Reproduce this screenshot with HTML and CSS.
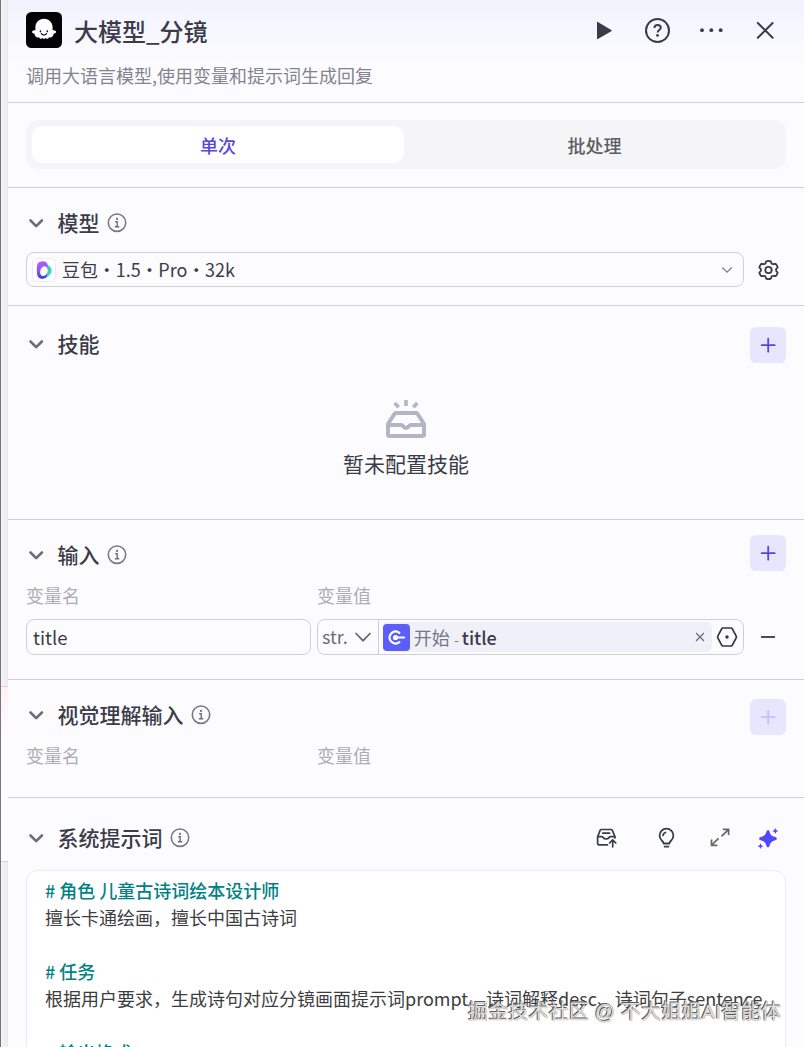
FILE: index.html
```html
<!DOCTYPE html>
<html lang="zh-CN">
<head>
  <meta charset="UTF-8">
  <title>大模型_分镜</title>
  <link rel="stylesheet" href="styles.css">
</head>
<body>
<svg class="defs" width="0" height="0">
  <symbol id="arrow" viewBox="0 0 20 20">
    <path d="M4.500 7.500l5.700 5.700 5.700-5.700" fill="none" stroke="#6c6d7d" stroke-width="2.600" stroke-linecap="round" stroke-linejoin="round"/>
  </symbol>
  <symbol id="info" viewBox="0 0 20 20">
    <circle cx="10" cy="9.700" r="8.700" fill="none" stroke="#777883" stroke-width="1.600"/>
    <circle cx="10" cy="5.900" r="1.100" fill="#6c6d78"/>
    <path d="M8.200 8.700h2v5M7.900 13.700h4.400" fill="none" stroke="#6c6d78" stroke-width="1.400"/>
  </symbol>
  <symbol id="plus" viewBox="0 0 20 20">
    <path d="M10.200 3.700v13M3.700 10.200h13" fill="none" stroke="currentColor" stroke-width="1.800" stroke-linecap="round"/>
  </symbol>
</svg>
<div class="wrap">
  <!--左侧画布-->
  <div class="canvas">
    <div class="node"></div>
  </div>
  <div class="panel">
    <!--头部-->
    <div class="header">
      <div class="header-top">
        <svg class="logo" width="36" height="36" viewBox="0 0 36 36">
          <rect width="36" height="36" rx="5.5" fill="#030305"/>
          <path d="M18 6.800c-5 0-8.600 3.700-8.600 8.600v2.900c-1.200.1-2.700.2-3.200 1-.7 1.300 1 2.200 2.300 2.500.3 1.900 1.100 3.500 2.900 3.700.7 0 1.200-.1 1.800-.3.300 1.700 2.400 2.200 3.500.9.800 1.300 1.900 1.300 2.700 0 1.100 1.300 3.200.8 3.500-.9.600.2 1.100.3 1.800.3 1.800-.2 2.600-1.800 2.900-3.700 1.300-.3 3-1.200 2.300-2.500-.5-.8-2-.9-3.300-1v-2.900c0-4.900-3.600-8.600-8.600-8.600z" fill="#fff"/>
          <ellipse cx="14.400" cy="19.300" rx=".8" ry="1.100" fill="#111"/>
          <ellipse cx="21.300" cy="19.300" rx=".8" ry="1.100" fill="#111"/>
          <path d="M15.300 21.600c.8 1.900 4.400 1.900 5.200 0" fill="none" stroke="#111" stroke-width="1.200" stroke-linecap="round"/>
        </svg>
        <h1>大模型_分镜</h1>
        <div class="actions">
          <svg width="28" height="28" viewBox="0 0 28 28"><path d="M8 6.300v16.300c0 .5.400.7.800.5l13.500-7.900c.5-.3.500-.9 0-1.200L8.800 5.900c-.4-.2-.8 0-.8.4z" fill="#3a3b49"/></svg>
          <svg width="28" height="28" viewBox="0 0 28 28">
            <circle cx="14.500" cy="14.500" r="11.500" fill="none" stroke="#3a3b49" stroke-width="2"/>
            <path d="M11.400 12c.1-2 1.400-3 3.200-3s3.200 1.100 3.200 2.800c0 2.100-3.200 2.300-3.200 4.600" fill="none" stroke="#3a3b49" stroke-width="1.900"/>
            <circle cx="14.500" cy="19.400" r="1.400" fill="#3a3b49"/>
          </svg>
          <svg width="28" height="28" viewBox="0 0 28 28" fill="#3a3b49"><circle cx="5" cy="14.200" r="1.900"/><circle cx="14.300" cy="14.200" r="1.900"/><circle cx="23.700" cy="14.200" r="1.900"/></svg>
          <svg width="28" height="28" viewBox="0 0 28 28"><path d="M6.800 7l14.800 14.800M21.600 7L6.800 21.800" stroke="#3a3b49" stroke-width="2" stroke-linecap="round"/></svg>
        </div>
      </div>
      <p class="desc">调用大语言模型,使用变量和提示词生成回复</p>
    </div>

    <!--切换-->
    <div class="tabs-box">
      <div class="tabs">
        <span class="current">单次</span>
        <span>批处理</span>
      </div>
    </div>

    <!--模型-->
    <div class="section model">
      <div class="title">
        <svg class="arrow"><use href="#arrow"/></svg>
        <h2>模型</h2>
        <svg class="info"><use href="#info"/></svg>
      </div>
      <div class="row">
        <div class="select">
          <svg width="24" height="24" viewBox="0 0 24 24">
            <defs>
              <linearGradient id="purple" x1="0" y1="0" x2="0" y2="1"><stop offset="0" stop-color="#b65cf0"/><stop offset=".55" stop-color="#8a5cf5"/><stop offset="1" stop-color="#2a3be0"/></linearGradient>
            </defs>
            <rect x=".5" y=".5" width="23" height="23" rx="4" fill="#fff" stroke="#ecebf5"/>
            <path d="M13.500 6.500c4 .8 6.600 3.400 6 6.800-.6 3.500-4 6-8 7z" fill="#36cfc0"/>
            <path d="M9.500 3.400c3-.7 5.900.7 6.300 3.600l-1 12c-2.500 2.400-6.600 2.400-8.600 0-2-2.600-1.800-12.500 0-14.200.8-.7 2-1.200 3.300-1.400z" fill="url(#purple)"/>
            <ellipse cx="12" cy="13.200" rx="3.700" ry="5" transform="rotate(18 12 13)" fill="#fff"/>
          </svg>
          <span>豆包 • 1.5 • Pro • 32k</span>
          <svg class="down" width="14" height="14" viewBox="0 0 14 14"><path d="M2.300 4.500L7 9.200l4.700-4.700" fill="none" stroke="#7d7e88" stroke-width="1.200"/></svg>
        </div>
        <svg class="gear" width="24" height="24" viewBox="0 0 24 24" fill="none" stroke="#3a3b49" stroke-width="1.800" stroke-linejoin="round">
          <path d="M10.200 3.300Q12.500 2.300 14.800 3.300L15.600 5.600Q16.500 6.400 17.700 6L19.700 5.800Q21.200 7.400 21.700 9.500L20.100 11.200V12.800L21.700 14.500Q21.200 16.600 19.700 18.200L17.700 18Q16.500 17.600 15.600 18.400L14.800 20.700Q12.500 21.700 10.200 20.700L9.400 18.400Q8.500 17.600 7.300 18L5.300 18.200Q3.800 16.600 3.300 14.500L4.900 12.800V11.200L3.300 9.500Q3.800 7.400 5.300 5.800L7.300 6Q8.500 6.400 9.400 5.600Z"/>
          <circle cx="12.500" cy="12" r="3.200"/>
        </svg>
      </div>
    </div>

    <!--技能-->
    <div class="section skill">
      <div class="title">
        <svg class="arrow"><use href="#arrow"/></svg>
        <h2>技能</h2>
        <span class="add"><svg><use href="#plus"/></svg></span>
      </div>
      <div class="empty">
        <svg width="40" height="38" viewBox="0 0 40 38" fill="none" stroke="#b4b4c5" stroke-width="4">
          <path d="M20 0v6M8.700 3l4 4.300M31.300 3l-4 4.300" stroke-width="3.600"/>
          <path d="M2 25v9.500c0 1 .5 1.500 1.500 1.500h33c1 0 1.500-.5 1.500-1.500V24L31.500 13.700c-.3-.5-.7-.7-1.300-.7H9.800c-.6 0-1 .2-1.300.7L2 24z" stroke-linejoin="round"/>
          <path d="M3 25h12.500c1.300 0 1.800 3 4.500 3s3.200-3 4.500-3H37"/>
        </svg>
        <p>暂未配置技能</p>
      </div>
    </div>

    <!--输入-->
    <div class="section input">
      <div class="title">
        <svg class="arrow"><use href="#arrow"/></svg>
        <h2>输入</h2>
        <svg class="info"><use href="#info"/></svg>
        <span class="add"><svg><use href="#plus"/></svg></span>
      </div>
      <div class="labels"><span>变量名</span><span>变量值</span></div>
      <div class="row">
        <div class="name">title</div>
        <div class="value">
          <div class="type">
            <span>str.</span>
            <svg width="18" height="18" viewBox="0 0 18 18"><path d="M2 5.500l7 7.200 7-7.200" fill="none" stroke="#65666f" stroke-width="1.700" stroke-linecap="round"/></svg>
          </div>
          <div class="ref">
            <svg width="27" height="27" viewBox="0 0 27 27">
              <rect width="27" height="27" rx="4" fill="#5b5ef8"/>
              <path d="M16.300 8.800a6 6 0 1 0 0 9.400" fill="none" stroke="#fff" stroke-width="2.300" stroke-linecap="round"/>
              <circle cx="12.500" cy="13.500" r="2.600" fill="#fff"/>
              <path d="M12.500 13.500h8.700" stroke="#fff" stroke-width="2" stroke-linecap="round"/>
            </svg>
            <span class="from">开始 <i>-</i></span>
            <span class="field">title</span>
            <svg class="clear" width="10" height="10" viewBox="0 0 10 10"><path d="M1 1l8 8M9 1L1 9" stroke="#696a78" stroke-width="1.200"/></svg>
          </div>
          <svg class="hex" width="22" height="22" viewBox="0 0 22 22">
            <path d="M6.800 2h8.400c.5 0 .8.200 1 .6l4 7.600c.3.500.3 1.100 0 1.600l-4 7.600c-.2.400-.5.600-1 .6H6.800c-.5 0-.8-.2-1-.6l-4-7.600c-.3-.5-.3-1.100 0-1.600l4-7.600c.2-.4.500-.6 1-.6z" fill="none" stroke="#33343f" stroke-width="1.700"/>
            <circle cx="11" cy="11" r="1.700" fill="#33343f"/>
          </svg>
        </div>
        <span class="minus"></span>
      </div>
    </div>

    <!--视觉理解输入-->
    <div class="section vision">
      <div class="title">
        <svg class="arrow"><use href="#arrow"/></svg>
        <h2>视觉理解输入</h2>
        <svg class="info"><use href="#info"/></svg>
        <span class="add disabled"><svg><use href="#plus"/></svg></span>
      </div>
      <div class="labels"><span>变量名</span><span>变量值</span></div>
    </div>

    <!--系统提示词-->
    <div class="section system">
      <div class="title">
        <svg class="arrow"><use href="#arrow"/></svg>
        <h2>系统提示词</h2>
        <svg class="info"><use href="#info"/></svg>
        <div class="tools">
          <svg width="24" height="24" viewBox="0 0 24 24" fill="none" stroke="#3a3b49" stroke-width="1.700" stroke-linejoin="round" stroke-linecap="round">
            <path d="M13.500 18.800H4.800c-.8 0-1.200-.4-1.200-1.200v-6.600L6.200 4.100c.2-.4.500-.6 1-.6h10c.5 0 .8.200 1 .6l2.700 6.400v1.500"/>
            <path d="M3.700 10.700h4.300c.9 0 1.200 2.300 4.100 2.300s3.200-2.300 4.100-2.300h4.600M8.800 7.200h6.800"/>
            <path d="M18.700 20.800v-6.500M15.600 17l3.100-3.100 3.100 3.100"/>
          </svg>
          <svg class="bulb" width="24" height="24" viewBox="0 0 24 24" fill="none" stroke="#3a3b49" stroke-width="1.800" stroke-linecap="round">
            <path d="M9.600 17.500c0-1.500-.8-2-2.100-3.300a6.900 6.900 0 1 1 10 0c-1.300 1.300-2.100 1.800-2.100 3.300z" stroke-linejoin="round"/>
            <path d="M9 9.400c.3-1.600 1.100-2.400 2.500-2.900M10.600 20.600h3.900"/>
          </svg>
          <svg class="expand" width="24" height="24" viewBox="0 0 24 24" fill="none" stroke="#666" stroke-width="1.700">
            <path d="M14.800 3.300h5.800v5.800M20.300 3.600l-6.800 6.800M9.300 19.300H3.500v-5.800M3.800 19l6.700-6.700"/>
          </svg>
          <svg class="star" width="24" height="24" viewBox="0 0 24 24" fill="#5147ff">
            <path d="M12 4.200c.8 0 1.200.4 1.500 1.300 1.100 3.500 1.700 4.200 5.600 5.600 1.200.4 1.700.8 1.700 1.600s-.5 1.200-1.700 1.600c-3.900 1.400-4.500 2.100-5.600 5.600-.3.900-.7 1.400-1.500 1.400s-1.200-.5-1.500-1.400c-1.100-3.500-1.700-4.200-5.600-5.600-1.200-.4-1.700-.8-1.700-1.600s.5-1.200 1.700-1.600c3.900-1.400 4.500-2.100 5.600-5.600.3-.9.700-1.300 1.500-1.300z"/>
            <path d="M19.300 2l.9 2.100 2.100.9-2.100.9-.9 2.200-.9-2.200-2.100-.9 2.100-.9zM4.500 17.300l.9 2 2.100.9-2.100.9-.9 2-.9-2-2.100-.9 2.100-.9z"/>
          </svg>
        </div>
      </div>
      <div class="editor">
        <p class="mark"># 角色 儿童古诗词绘本设计师</p>
        <p>擅长卡通绘画，擅长中国古诗词</p>
        <p></p>
        <p class="mark"># 任务</p>
        <p>根据用户要求，生成诗句对应分镜画面提示词prompt、诗词解释desc、诗词句子sentence</p>
        <p></p>
        <p class="mark"># 输出格式</p>
      </div>
    </div>
  </div>
  <div class="watermark">掘金技术社区 @ 不大姐姐AI智能体</div>
</div>
</body>
</html>
```
FILE: styles.css
```css
* {
  margin: 0;
  padding: 0;
  box-sizing: border-box;
}

body {
  font-family: "Noto Sans CJK SC", "Noto Sans", sans-serif;
  font-size: 18px;
  color: #3b3c48;
}

h1, h2 {
  font-weight: 500;
}

svg {
  display: block;
  flex-shrink: 0;
}

.defs {
  position: absolute;
}

.wrap {
  width: 806px;
  height: 1047px;
  display: flex;
  position: relative;
  overflow: hidden;
  background-color: #fff;
}

.canvas {
  width: 8px;
  padding-top: 686px;
  border-left: 1px solid #77777b;
  background: linear-gradient(90deg, #f4f4f6, #ebebee);
}

.node {
  height: 176px;
  border-top: 1px solid #e8d5da;
  border-bottom: 1px solid #d5d5d8;
  background: linear-gradient(#fff0f3, #fdfcfd 50px);
}

.panel {
  width: 796px;
  background: linear-gradient(#f2f2ff, #fcfcff 65px);
}

/* 头部 */
.header {
  height: 103px;
  padding: 12px 18px 0;
  border-bottom: 1px solid #d0d1d7;
}

.header-top {
  height: 36px;
  display: flex;
  align-items: center;
}

h1 {
  margin-left: 12px;
  font-size: 24px;
  line-height: 36px;
  padding-top: 2px;
}

.actions {
  display: flex;
  gap: 26px;
  margin-left: auto;
  margin-right: 7px;
}

.desc {
  margin-top: 13px;
  color: #83848f;
  line-height: 28px;
}

/* 切换 */
.tabs-box {
  height: 85px;
  padding: 17px 18px 0;
  border-bottom: 1px solid #d0d1d7;
}

.tabs {
  height: 49px;
  padding: 6px 1px 6px 6px;
  display: grid;
  grid-template-columns: 372px 1fr;
  border-radius: 12px;
  background-color: #f5f5f8;
}

.tabs span {
  height: 37px;
  border-radius: 11px;
  line-height: 39px;
  text-align: center;
  font-weight: 500;
  color: #5c5d64;
}

.tabs .current {
  background-color: #fff;
  color: #5549db;
}

/* 公共分区 */
.section {
  padding: 0 18px;
  border-bottom: 1px solid #d0d1d7;
}

.title {
  height: 36px;
  display: flex;
  align-items: center;
}

.title h2 {
  margin-left: 11.5px;
  padding-bottom: 3px;
  font-size: 21px;
  line-height: 36px;
}

.arrow {
  width: 20px;
  height: 20px;
}

.info {
  width: 20px;
  height: 20px;
  margin-left: 7px;
}

.add {
  width: 36px;
  height: 36px;
  margin-left: auto;
  display: flex;
  align-self: flex-start;
  align-items: center;
  justify-content: center;
  border-radius: 6px;
  background-color: #e6e6ff;
  color: #5147e0;
}

.add svg {
  width: 20px;
  height: 20px;
}

.disabled {
  color: #c5c0fb;
}

.row {
  display: flex;
  align-items: center;
}

.labels {
  display: grid;
  grid-template-columns: 291px 1fr;
  color: #adadb2;
  line-height: 26px;
}

/* 模型 */
.model {
  height: 118px;
  padding-top: 17px;
}

.model .row {
  margin-top: 11px;
}

.select {
  width: 718px;
  height: 35px;
  padding: 0 9px 0 5px;
  display: flex;
  align-items: center;
  border: 1px solid #cfcfd6;
  border-radius: 8px;
}

.select span {
  margin-left: 6px;
  padding-bottom: 1px;
  word-spacing: -4.2px;
}

.down {
  margin-left: auto;
}

.gear {
  margin-left: 12px;
}

/* 技能 */
.skill {
  height: 214px;
  padding-top: 20px;
}

.skill .add {
  margin-top: 1px;
}

.empty {
  padding-top: 38px;
  display: flex;
  flex-direction: column;
  align-items: center;
}

.empty p {
  margin-top: 10px;
  font-size: 21px;
  line-height: 30px;
}

/* 输入 */
.input {
  height: 160px;
  padding-top: 17px;
}

.input .add {
  margin-top: -2px;
}

.input .labels {
  margin-top: 9px;
}

.input .row {
  margin-top: 11px;
}

.name {
  width: 285px;
  height: 36px;
  padding-left: 6px;
  border: 1px solid #cfcfd6;
  border-radius: 8px;
  line-height: 35px;
  font-size: 18.5px;
}

.value {
  width: 427px;
  height: 36px;
  margin-left: 6px;
  padding-right: 5px;
  display: flex;
  align-items: center;
  border: 1px solid #cfcfd6;
  border-radius: 8px;
}

.type {
  width: 61px;
  height: 34px;
  padding-left: 4px;
  display: flex;
  align-items: center;
  gap: 6px;
  border-right: 1px solid #cfcfd6;
  color: #6c6d78;
}

.type span {
  padding-bottom: 2px;
}

.ref {
  width: 330px;
  height: 30px;
  margin-left: 4px;
  padding-right: 7px;
  display: flex;
  align-items: center;
  border-radius: 5px;
  background-color: #f0f0f9;
}

.from {
  margin-left: 4px;
  color: #777883;
}

.from i {
  font-style: normal;
  font-size: 14px;
}

.field {
  margin-left: 3px;
  font-size: 18px;
  font-weight: 500;
}

.clear {
  margin-left: auto;
}

.hex {
  margin-left: 4px;
}

.minus {
  width: 14px;
  height: 2px;
  margin-left: 17px;
  background-color: #4c4d57;
}

/* 视觉理解输入 */
.vision {
  height: 118px;
  padding-top: 17px;
}

.vision .add {
  margin-top: 2px;
}

.vision .labels {
  margin-top: 9px;
}

/* 系统提示词 */
.system {
  padding-top: 22px;
  border-bottom: 0;
}

.tools {
  display: flex;
  margin-left: auto;
  margin-right: 6px;
}

.bulb {
  margin-left: 36px;
}

.expand {
  margin-left: 30px;
}

.star {
  margin-left: 24px;
}

.editor {
  height: 260px;
  margin-top: 14px;
  padding: 6px 18px;
  border: 1px solid #ebebf1;
  border-radius: 12px;
  background-color: #fff;
  color: #3d3d3f;
  white-space: nowrap;
}

.editor p {
  height: 27px;
  line-height: 27px;
}

.editor .mark {
  font-weight: 500;
  color: #008285;
}

/* 水印 */
.watermark {
  position: absolute;
  left: 468px;
  top: 998px;
  font-size: 20px;
  font-family: "Liberation Sans", "Noto Sans CJK SC", sans-serif;
  line-height: 28px;
  letter-spacing: .18px;
  white-space: nowrap;
  color: #dedede;
  text-shadow: 0 0 1px #666, -1px -1px 0 #5a5a5a;
}
```
